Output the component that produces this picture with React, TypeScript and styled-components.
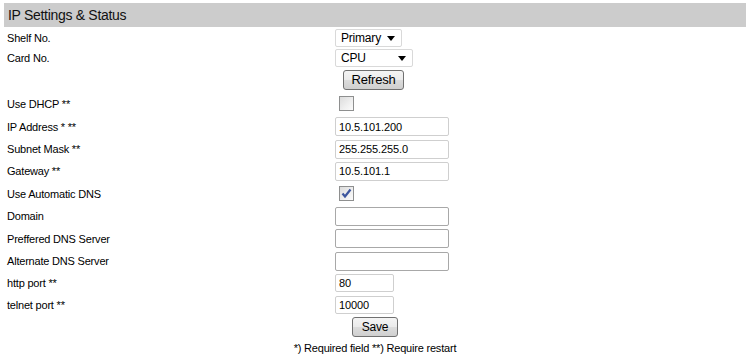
import React from "react";
import styled, { createGlobalStyle } from "styled-components";

const Global = createGlobalStyle`
  html, body {
    margin: 0;
    padding: 0;
    background: #fff;
  }
  body {
    font-family: "Liberation Sans", Arial, sans-serif;
    color: #000;
  }
`;

type Field =
  | { kind: "select"; label: string; value: string; width: number }
  | { kind: "button"; label: string; h: number }
  | { kind: "check"; label: string; checked: boolean; h: number }
  | { kind: "text"; label: string; value: string; width: number; h: number };

const fields: Field[] = [
  { kind: "select", label: "Shelf No.", value: "Primary", width: 67 },
  { kind: "select", label: "Card No.", value: "CPU", width: 78 },
  { kind: "button", label: "Refresh", h: 24 },
  { kind: "check", label: "Use DHCP **", checked: false, h: 23 },
  { kind: "text", label: "IP Address * **", value: "10.5.101.200", width: 114, h: 23 },
  { kind: "text", label: "Subnet Mask **", value: "255.255.255.0", width: 114, h: 22 },
  { kind: "text", label: "Gateway **", value: "10.5.101.1", width: 114, h: 22 },
  { kind: "check", label: "Use Automatic DNS", checked: true, h: 23 },
  { kind: "text", label: "Domain", value: "", width: 114, h: 22 },
  { kind: "text", label: "Preffered DNS Server", value: "", width: 114, h: 23 },
  { kind: "text", label: "Alternate DNS Server", value: "", width: 114, h: 22 },
  { kind: "text", label: "http port **", value: "80", width: 59, h: 22 },
  { kind: "text", label: "telnet port **", value: "10000", width: 59, h: 22 },
];

export default function App() {
  return (
    <>
      <Global />
      <Page>
        <Header>IP Settings &amp; Status</Header>
        {fields.map((f) => (
          <Row key={f.label + f.kind} $h={f.kind === "select" ? 20 : f.h}>
            <Label>{f.kind === "button" ? "" : f.label}</Label>
            <Cell>
              {f.kind === "select" && (
                <SelectBox $w={f.width}>
                  <span>{f.value}</span>
                  <Caret />
                </SelectBox>
              )}
              {f.kind === "button" && <Button $ml={8}>{f.label}</Button>}
              {f.kind === "check" && (
                <Check>
                  {f.checked && (
                    <svg width="11" height="11" viewBox="0 0 11 11">
                      <path d="M1.5 5.5 L4 8.5 L9.5 1.5" fill="none" stroke="#3d569e" strokeWidth="2.2" />
                    </svg>
                  )}
                </Check>
              )}
              {f.kind === "text" && (
                <TextInput $w={f.width} $empty={f.value === ""} defaultValue={f.value} />
              )}
            </Cell>
          </Row>
        ))}
        <Center $h={22}>
          <Button $small>Save</Button>
        </Center>
        <Center $h={20}>
          <Note>*) Required field **) Require restart</Note>
        </Center>
      </Page>
    </>
  );
}

const Page = styled.div`
  padding: 3px 4px 0 4px;
  width: 742px;
`;

const Header = styled.div`
  height: 24px;
  line-height: 24px;
  background: #cccccc;
  padding-left: 4px;
  font-size: 14px;
  letter-spacing: -0.3px;
  color: #111;
  margin-bottom: 1px;
`;

const Row = styled.div<{ $h: number }>`
  display: grid;
  grid-template-columns: 331px 1fr;
  align-items: center;
  height: ${({ $h }) => $h}px;
`;

const Label = styled.div`
  padding-left: 3px;
  font-size: 11px;
  letter-spacing: -0.2px;
  color: #000;
  white-space: nowrap;
`;

const Cell = styled.div`
  display: flex;
  align-items: center;
`;

const SelectBox = styled.div<{ $w: number }>`
  box-sizing: border-box;
  width: ${({ $w }) => $w}px;
  height: 18px;
  border: 1px solid #d9d9d9;
  border-radius: 2px;
  display: flex;
  align-items: center;
  justify-content: space-between;
  padding: 0 6px 0 5px;
  font-size: 12px;
  letter-spacing: -0.2px;
  color: #000;
  background: #fff;
`;

const Caret = styled.span`
  width: 0;
  height: 0;
  border-left: 4.5px solid transparent;
  border-right: 4.5px solid transparent;
  border-top: 5px solid #000;
`;

const Button = styled.button<{ $ml?: number; $small?: boolean }>`
  box-sizing: border-box;
  margin-left: ${({ $ml }) => $ml ?? 0}px;
  height: 20px;
  padding: 0 ${({ $small }) => ($small ? 8 : 7)}px;
  min-width: ${({ $small }) => ($small ? 46 : 61)}px;
  border: 1px solid #707070;
  border-radius: 3px;
  background: linear-gradient(#f4f4f4 0%, #ebebeb 48%, #dcdcdc 52%, #cfcfcf 100%);
  font-family: "Liberation Sans", Arial, sans-serif;
  font-size: ${({ $small }) => ($small ? 12 : 13)}px;
  letter-spacing: -0.2px;
  color: #000;
  line-height: 18px;
`;

const Check = styled.span`
  box-sizing: border-box;
  margin-left: 4px;
  width: 15px;
  height: 15px;
  border: 1px solid #8e8f8f;
  background: linear-gradient(135deg, #dcdcdc 0%, #f0f0f0 60%, #fbfbfb 100%);
  display: flex;
  align-items: center;
  justify-content: center;
`;

const TextInput = styled.input<{ $w: number; $empty: boolean }>`
  box-sizing: border-box;
  width: ${({ $w }) => $w}px;
  height: ${({ $w }) => ($w < 100 ? 18 : 19)}px;
  border: 1px solid ${({ $empty }) => ($empty ? "#a8a8a8" : "#cfcfcf")};
  border-radius: 2px;
  padding: 0 3px;
  font-family: "Liberation Sans", Arial, sans-serif;
  font-size: 11px;
  letter-spacing: -0.1px;
  color: #000;
  outline: none;
`;

const Center = styled.div<{ $h: number }>`
  height: ${({ $h }) => $h}px;
  display: flex;
  align-items: center;
  justify-content: center;
`;

const Note = styled.div`
  font-size: 11px;
  letter-spacing: -0.2px;
  color: #000;
`;
